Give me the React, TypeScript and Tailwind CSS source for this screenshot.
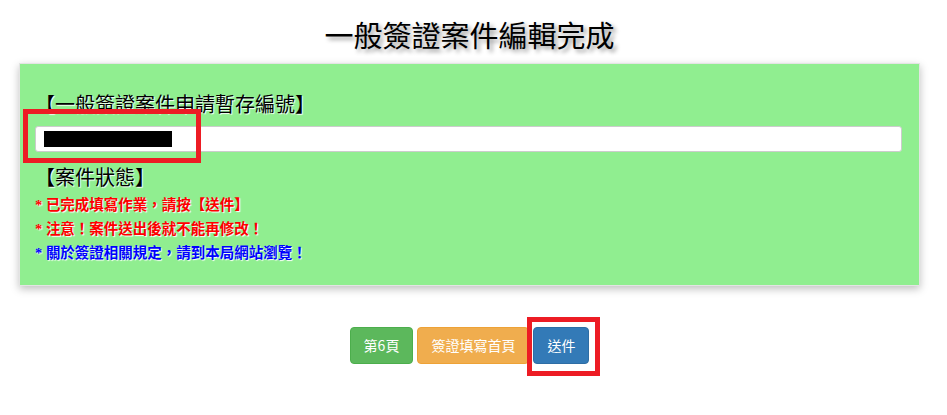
const notes = [
  { text: "* 已完成填寫作業，請按【送件】", color: "text-[#ff0000]" },
  { text: "* 注意！案件送出後就不能再修改！", color: "text-[#ff0000]" },
  { text: "* 關於簽證相關規定，請到本局網站瀏覽！", color: "text-[#0000ff]" },
]

export default function App() {
  return (
    <div className="min-h-[415px] w-full bg-white font-['Liberation_Serif','Noto_Sans_CJK_TC',serif] text-black">
      <div className="flex w-[939px] flex-col items-center">
        <h1 className="mt-[17px] h-[40px] text-[29px] leading-[40px] font-normal [text-shadow:3px_3px_4px_#999]">
          一般簽證案件編輯完成
        </h1>

        <section className="mt-[6px] w-[901px] border border-[#e4e4e4] bg-[#90ee90] pt-[27px] pr-[17px] pb-[20px] pl-[15px] shadow-[0_3px_8px_rgba(0,0,0,0.25)]">
          <div className="relative">
            <h2 className="h-[28px] text-[20px] leading-[28px] [text-shadow:1px_1px_1px_#fff]">
              【一般簽證案件申請暫存編號】
            </h2>
            <div className="mt-[7px] flex h-[26px] items-center rounded-[3px] border border-[#cccccc] bg-white pl-[8px]">
              <div className="h-[16px] w-[128px] bg-black" />
            </div>
            {/* highlight marker */}
            <div className="absolute top-[18px] left-[-12px] h-[54px] w-[178px] border-[5px] border-[#ed1c24]" />
          </div>

          <h2 className="mt-[12px] h-[28px] text-[20px] leading-[28px] [text-shadow:1px_1px_1px_#fff]">
            【案件狀態】
          </h2>
          <ul className="mt-px">
            {notes.map((n) => (
              <li
                key={n.text}
                className={`h-[24px] text-[14.5px] leading-[24px] font-bold ${n.color} [text-shadow:1px_1px_1px_#fff]`}
              >
                {n.text}
              </li>
            ))}
          </ul>
        </section>

        <div className="mt-[41px] flex gap-[4px] font-['Noto_Sans_CJK_TC','Liberation_Sans',sans-serif] text-[14px] text-white">
          <button className="h-[37px] rounded-[4px] border border-[#4cae4c] bg-[#5cb85c] px-[13px]">
            第6頁
          </button>
          <button className="h-[37px] rounded-[4px] border border-[#eea236] bg-[#f0ad4e] px-[13px]">
            簽證填寫首頁
          </button>
          <div className="relative">
            <button className="h-[37px] rounded-[4px] border border-[#2e6da4] bg-[#337ab7] px-[13px]">
              送件
            </button>
            <div className="absolute top-[-10px] left-[-6px] h-[59px] w-[73px] border-[5px] border-[#ed1c24]" />
          </div>
        </div>
      </div>
    </div>
  )
}
